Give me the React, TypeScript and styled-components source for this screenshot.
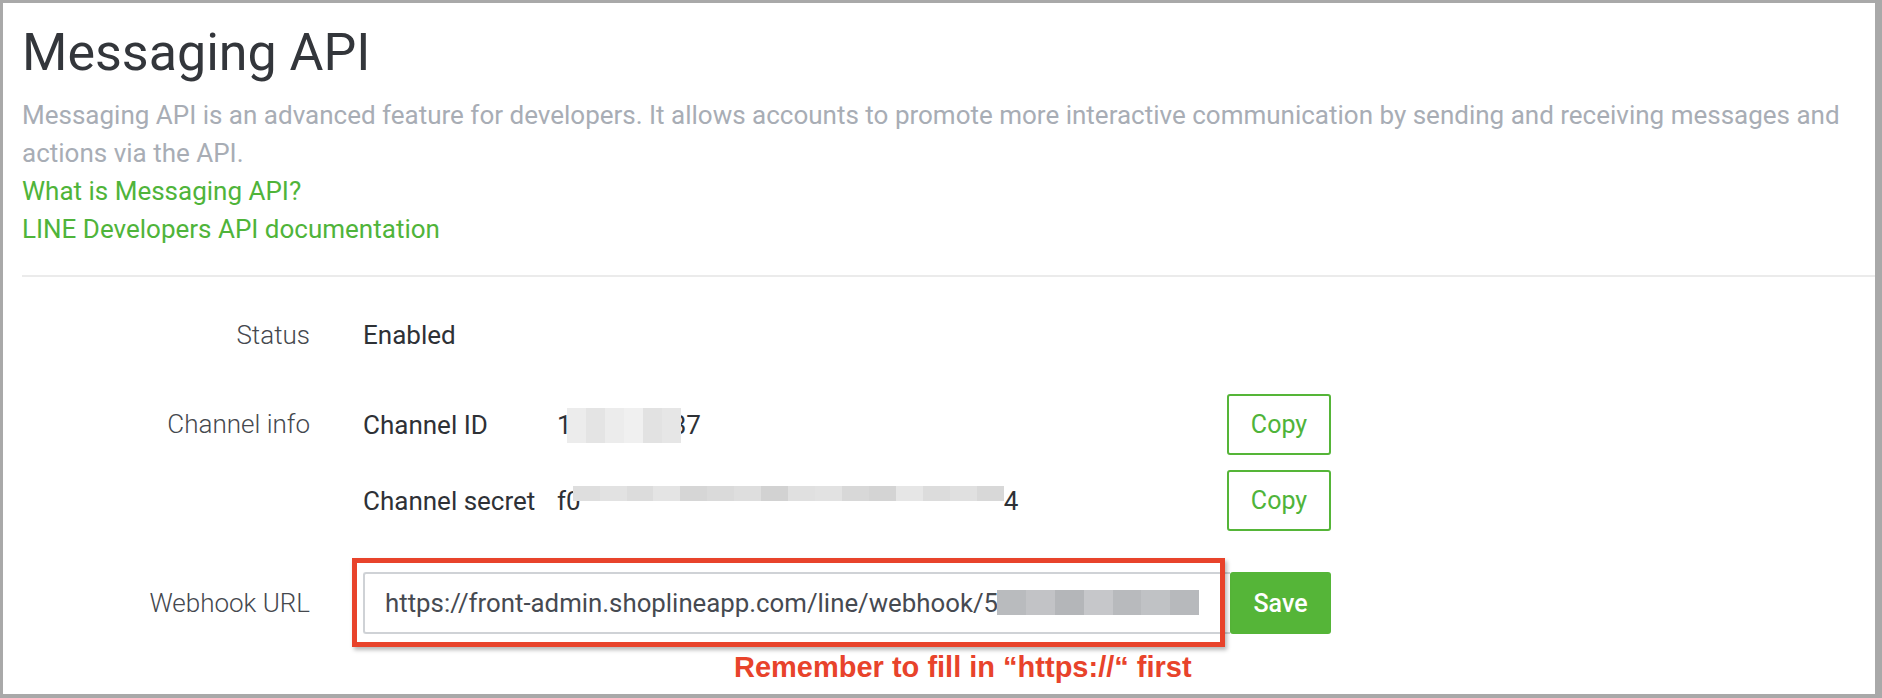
import React from "react";
import styled, { createGlobalStyle } from "styled-components";

const GlobalStyle = createGlobalStyle`
  * { box-sizing: border-box; }
  html, body { margin: 0; padding: 0; background: #ffffff; }
  body { font-family: Roboto, "Liberation Sans", Arial, sans-serif; }
`;

const Frame = styled.div`
  width: 1882px;
  height: 698px;
  overflow: hidden;
  background: #ffffff;
  border-style: solid;
  border-color: #a9a9a9;
  border-width: 3px 7px 4px 3px;
  padding: 24px 0 0 19px;
`;

const Title = styled.h1`
  margin: 0;
  font-size: 52px;
  line-height: 52px;
  font-weight: 400;
  color: #33363b;
`;

const Description = styled.p`
  margin: 17px 0 0 0;
  font-size: 26px;
  line-height: 38px;
  color: #a8adb5;
  max-width: 1845px;
`;

const DocLink = styled.a`
  display: block;
  font-size: 26px;
  line-height: 38px;
  color: #4fb43a;
  text-decoration: none;
`;

const Divider = styled.hr`
  margin: 27px 0 0 0;
  border: none;
  height: 2px;
  background: #ebebeb;
`;

const FormRow = styled.div<{ $gap: number }>`
  display: grid;
  grid-template-columns: 288px 968px;
  column-gap: 53px;
  align-items: start;
  margin-top: ${(p) => p.$gap}px;
`;

const Label = styled.div<{ $height: number }>`
  text-align: right;
  font-size: 26px;
  line-height: ${(p) => p.$height}px;
  font-weight: 300;
  color: #45484e;
`;

const Value = styled.div<{ $height: number }>`
  font-size: 26px;
  line-height: ${(p) => p.$height}px;
  color: #2e3136;
`;

const InfoList = styled.div`
  display: flex;
  flex-direction: column;
  gap: 15px;
`;

const InfoLine = styled.div`
  display: flex;
  align-items: center;
  height: 61px;
`;

const InfoName = styled.div`
  width: 194px;
  flex: none;
  font-size: 26px;
  color: #2e3136;
`;

const InfoValue = styled.div`
  flex: 1;
  display: flex;
  align-items: center;
  font-size: 26px;
  color: #2e3136;
`;

const Masked = styled.span<{ $width: number; $height: number; $ml: number; $mr: number; $dy: number }>`
  position: relative;
  z-index: 1;
  display: inline-flex;
  flex: none;
  width: ${(p) => p.$width}px;
  height: ${(p) => p.$height}px;
  margin-left: ${(p) => p.$ml}px;
  margin-right: ${(p) => p.$mr}px;
  transform: translateY(${(p) => p.$dy}px);
`;

const MaskCell = styled.span<{ $color: string }>`
  flex: 1;
  background: ${(p) => p.$color};
`;

const OutlineButton = styled.button`
  width: 104px;
  height: 61px;
  flex: none;
  border: 2px solid #55b538;
  border-radius: 3px;
  background: #ffffff;
  color: #4fb43a;
  font-family: Roboto, "Liberation Sans", Arial, sans-serif;
  font-size: 25px;
  padding: 0;
`;

const WebhookGroup = styled.div`
  position: relative;
  display: flex;
  height: 62px;
`;

const UrlField = styled.div`
  flex: 1;
  display: flex;
  align-items: center;
  border: 2px solid #cfd2d6;
  border-right: none;
  border-radius: 3px 0 0 3px;
  padding-left: 20px;
  font-size: 25.8px;
  color: #464a51;
  white-space: nowrap;
  overflow: hidden;
`;

const SaveButton = styled.button`
  width: 101px;
  flex: none;
  border: none;
  border-radius: 3px;
  background: #55b538;
  color: #ffffff;
  font-family: Roboto, "Liberation Sans", Arial, sans-serif;
  font-size: 25px;
  font-weight: 500;
  padding: 0;
`;

const Highlight = styled.div`
  position: absolute;
  left: -11px;
  top: -14px;
  width: 873px;
  height: 89px;
  border: 5px solid #e8432b;
  box-shadow: 2px 3px 4px rgba(0, 0, 0, 0.28);
  pointer-events: none;
`;

const Note = styled.div`
  margin: 16px 0 0 712px;
  font-family: "Liberation Sans", Arial, sans-serif;
  font-size: 29px;
  line-height: 34px;
  font-weight: 700;
  color: #e8432b;
  white-space: nowrap;
`;

const idCells = ["#ececec", "#e4e4e4", "#ececec", "#f0f0f0", "#e2e2e2", "#e6e6e6"];
const secretCells = [
  "#dedede", "#e2e2e2", "#dcdcdc", "#e4e4e4", "#d6d6d6", "#dadada", "#dedede", "#d2d2d2",
  "#e0e0e0", "#e2e2e2", "#d8d8d8", "#d4d4d4", "#e6e6e6", "#dcdcdc", "#e0e0e0", "#d8d8d8",
];
const urlCells = ["#b9bbbe", "#c2c3c6", "#b4b6b9", "#c6c7ca", "#b8babd", "#c0c2c5", "#b7b9bc"];

type MaskProps = { cells: string[]; width: number; height: number; ml?: number; mr?: number; dy?: number };

function Mask({ cells, width, height, ml = 0, mr = 0, dy = 0 }: MaskProps) {
  return (
    <Masked $width={width} $height={height} $ml={ml} $mr={mr} $dy={dy}>
      {cells.map((c, i) => (
        <MaskCell key={i} $color={c} />
      ))}
    </Masked>
  );
}

export default function App() {
  return (
    <>
      <GlobalStyle />
      <Frame>
        <Title>Messaging API</Title>
        <Description>
          Messaging API is an advanced feature for developers. It allows accounts to promote more interactive
          communication by sending and receiving messages and actions via the API.
        </Description>
        <DocLink href="#">What is Messaging API?</DocLink>
        <DocLink href="#">LINE Developers API documentation</DocLink>
        <Divider />

        <FormRow $gap={28}>
          <Label $height={61}>Status</Label>
          <Value $height={61}>Enabled</Value>
        </FormRow>

        <FormRow $gap={28}>
          <Label $height={61}>Channel info</Label>
          <InfoList>
            <InfoLine>
              <InfoName>Channel ID</InfoName>
              <InfoValue>
                1<Mask cells={idCells} width={114} height={35} ml={-5} mr={-9} dy={1} />37
              </InfoValue>
              <OutlineButton>Copy</OutlineButton>
            </InfoLine>
            <InfoLine>
              <InfoName>Channel secret</InfoName>
              <InfoValue>
                f0<Mask cells={secretCells} width={431} height={15} ml={-8} dy={-7} />4
              </InfoValue>
              <OutlineButton>Copy</OutlineButton>
            </InfoLine>
          </InfoList>
        </FormRow>

        <FormRow $gap={41}>
          <Label $height={62}>Webhook URL</Label>
          <WebhookGroup>
            <UrlField>
              https://front-admin.shoplineapp.com/line/webhook/5
              <Mask cells={urlCells} width={202} height={25} ml={-1} dy={-1} />
            </UrlField>
            <SaveButton>Save</SaveButton>
            <Highlight />
          </WebhookGroup>
        </FormRow>

        <Note>Remember to fill in “https://“ first</Note>
      </Frame>
    </>
  );
}
